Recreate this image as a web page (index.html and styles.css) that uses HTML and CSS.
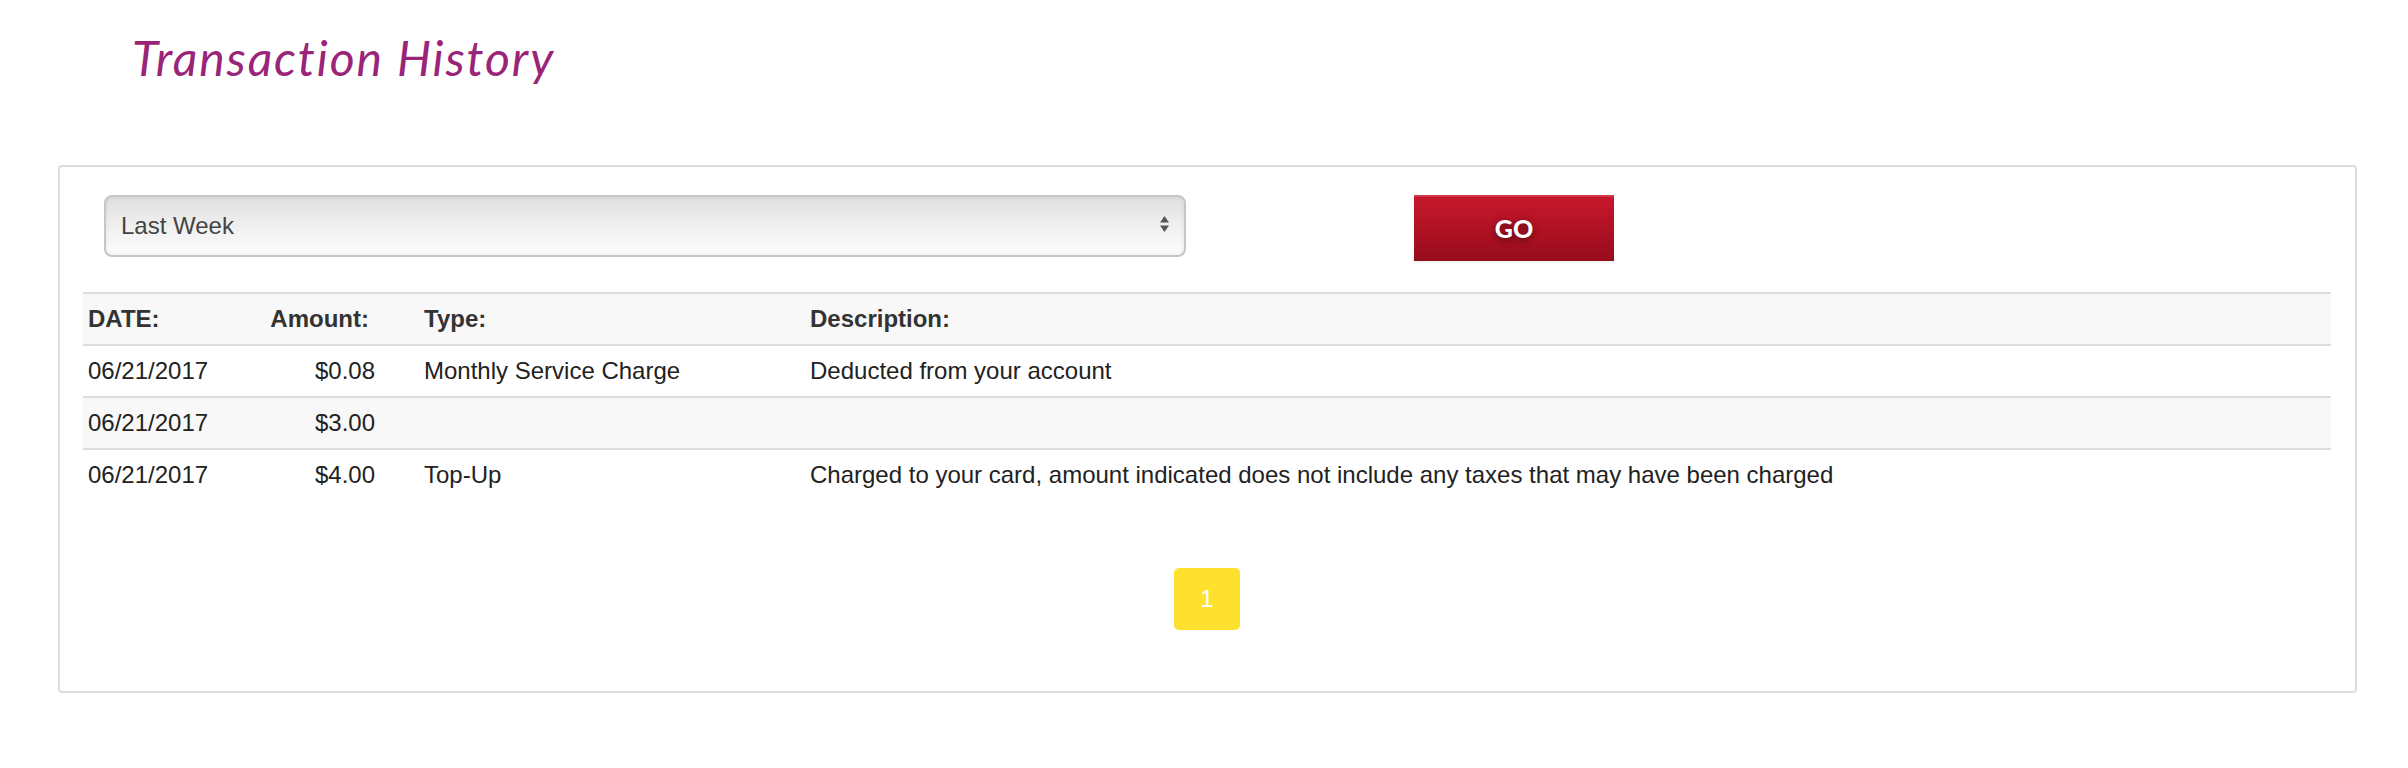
FILE: index.html
```html
<!DOCTYPE html>
<html lang="en">
  <head>
    <meta charset="UTF-8" />
    <meta name="viewport" content="width=device-width, initial-scale=1.0" />
    <title>Transaction History</title>
    <link rel="stylesheet" href="styles.css">
  </head>
  <body>
    <div class="content">
      <h1 class="page-title">Transaction History</h1>

      <div class="panel">
        <form class="filter">
          <div class="select-wrap">
            <select class="period">
              <option>Last Week</option>
              <option>Last Month</option>
              <option>Last 3 Months</option>
            </select>
            <svg class="select-arrows" width="9" height="16" viewBox="0 0 9 16">
              <path d="M4.5 0 L9 6.5 L0 6.5 Z" fill="#555" />
              <path d="M0 9.5 L9 9.5 L4.5 16 Z" fill="#555" />
            </svg>
          </div>
          <button type="button" class="go-btn">GO</button>
        </form>

        <table class="history">
          <colgroup>
            <col class="c-date">
            <col class="c-amount">
            <col class="c-type">
            <col>
          </colgroup>
          <thead>
            <tr>
              <th class="date">DATE:</th>
              <th class="amount">Amount:</th>
              <th>Type:</th>
              <th>Description:</th>
            </tr>
          </thead>
          <tbody>
            <tr>
              <td class="date">06/21/2017</td>
              <td class="amount">$0.08</td>
              <td>Monthly Service Charge</td>
              <td>Deducted from your account</td>
            </tr>
            <tr>
              <td class="date">06/21/2017</td>
              <td class="amount">$3.00</td>
              <td></td>
              <td></td>
            </tr>
            <tr>
              <td class="date">06/21/2017</td>
              <td class="amount">$4.00</td>
              <td>Top-Up</td>
              <td>Charged to your card, amount indicated does not include any taxes that may have been charged</td>
            </tr>
          </tbody>
        </table>

        <div class="pager">
          <a class="page-btn">1</a>
        </div>
      </div>
    </div>
  </body>
</html>
```

FILE: styles.css
```css
body {
  margin: 0;
  background: #fff;
  font-family: "Liberation Sans", Arial, sans-serif;
  color: #222;
}

.content {
  margin: 0 51px 0 58px;
  padding-top: 29px;
}

.page-title {
  margin: 0 0 78px 74px;
  font-family: Lato, "Open Sans", sans-serif;
  font-style: italic;
  font-weight: 400;
  font-size: 48px;
  line-height: 1.2;
  letter-spacing: 1.9px;
  color: #9a2478;
}

.panel {
  border: 2px solid #ddd;
  border-radius: 4px;
  padding: 28px 24px 61px 23px;
}

.filter {
  display: flex;
  align-items: flex-start;
  gap: 228px;
  padding-left: 21px;
  margin: 0 0 31px;
}

.select-wrap {
  position: relative;
}

.period {
  appearance: none;
  -webkit-appearance: none;
  width: 1082px;
  height: 62px;
  padding: 0 40px 0 15px;
  border: 2px solid #c6c6c6;
  border-radius: 8px;
  background: linear-gradient(#e0e0e0, #f2f2f2 60%, #fcfcfc);
  box-shadow: inset 0 0 4px rgba(0, 0, 0, 0.08);
  font-family: "Liberation Sans", Arial, sans-serif;
  font-size: 24px;
  color: #444;
  outline: none;
}

.select-arrows {
  position: absolute;
  top: 21px;
  right: 17px;
  pointer-events: none;
}

.go-btn {
  width: 200px;
  height: 66px;
  border: none;
  border-radius: 0;
  background: linear-gradient(#c6182b, #b11224 50%, #960c1b);
  box-shadow: inset 0 2px 0 rgba(255, 255, 255, 0.15), 0 2px 2px rgba(0, 0, 0, 0.06);
  font-family: Lato, "Open Sans", sans-serif;
  font-weight: 900;
  font-size: 25px;
  color: #fff;
  text-shadow: 0 2px 6px rgba(0, 0, 0, 0.55);
  cursor: pointer;
}

.history {
  width: 100%;
  border-collapse: collapse;
  table-layout: fixed;
  font-size: 24px;
}

.c-date {
  width: 177px;
}

.c-amount {
  width: 158px;
}

.c-type {
  width: 386px;
}

.history tr {
  height: 52px;
  border-top: 2px solid #ddd;
}

.history th,
.history td {
  padding: 0 6px;
  text-align: left;
  vertical-align: middle;
  white-space: nowrap;
}

.history th {
  font-weight: 700;
  color: #333;
}

.history thead tr,
.history tbody tr:nth-child(even) {
  background: #f8f8f8;
}

.history .date {
  padding-left: 5px;
}

.history .amount {
  text-align: right;
  padding-right: 43px;
}

.history th.amount {
  padding-right: 49px;
}

.pager {
  display: flex;
  justify-content: center;
  margin-top: 67px;
}

.page-btn {
  display: flex;
  align-items: center;
  justify-content: center;
  width: 66px;
  height: 62px;
  border-radius: 5px;
  background: #fee02e;
  color: #fff;
  font-size: 24px;
  cursor: pointer;
}
```
